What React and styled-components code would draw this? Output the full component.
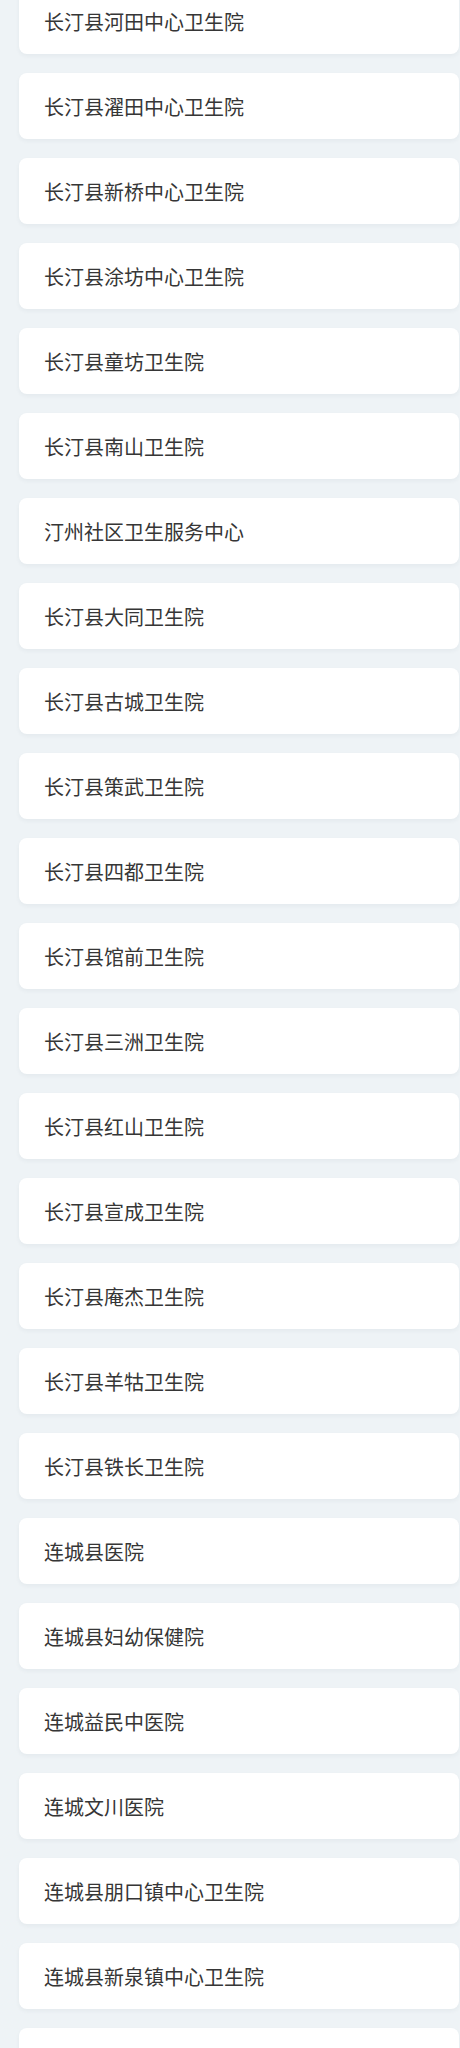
import styled, { createGlobalStyle } from "styled-components";

const hospitals = [
  "长汀县河田中心卫生院",
  "长汀县濯田中心卫生院",
  "长汀县新桥中心卫生院",
  "长汀县涂坊中心卫生院",
  "长汀县童坊卫生院",
  "长汀县南山卫生院",
  "汀州社区卫生服务中心",
  "长汀县大同卫生院",
  "长汀县古城卫生院",
  "长汀县策武卫生院",
  "长汀县四都卫生院",
  "长汀县馆前卫生院",
  "长汀县三洲卫生院",
  "长汀县红山卫生院",
  "长汀县宣成卫生院",
  "长汀县庵杰卫生院",
  "长汀县羊牯卫生院",
  "长汀县铁长卫生院",
  "连城县医院",
  "连城县妇幼保健院",
  "连城益民中医院",
  "连城文川医院",
  "连城县朋口镇中心卫生院",
  "连城县新泉镇中心卫生院",
  "",
];

const GlobalStyle = createGlobalStyle`
  html, body {
    margin: 0;
    padding: 0;
    background: #eef3f6;
  }
  body {
    font-family: "Noto Sans CJK SC", "Noto Sans", sans-serif;
    overflow: hidden;
  }
`;

const Page = styled.div`
  height: 2048px;
  overflow: hidden;
  background: #eef3f6;
`;

//list scrolled a little, first card cut at the top
const List = styled.ul`
  list-style: none;
  margin: -12px 1px 0 19px;
  padding: 0;
  display: flex;
  flex-direction: column;
  gap: 19px;
`;

const Card = styled.li`
  height: 66px;
  flex-shrink: 0;
  display: flex;
  align-items: center;
  padding: 0 25px;
  background: #fff;
  border-radius: 8px;
  box-shadow: 0 2px 4px rgba(40, 60, 80, 0.05);
  color: #363636;
  font-size: 20px;
  cursor: pointer;
`;

export default function App() {
  return (
    <Page>
      <GlobalStyle />
      <List>
        {hospitals.map((name, i) => (
          <Card key={i}>{name}</Card>
        ))}
      </List>
    </Page>
  );
}
